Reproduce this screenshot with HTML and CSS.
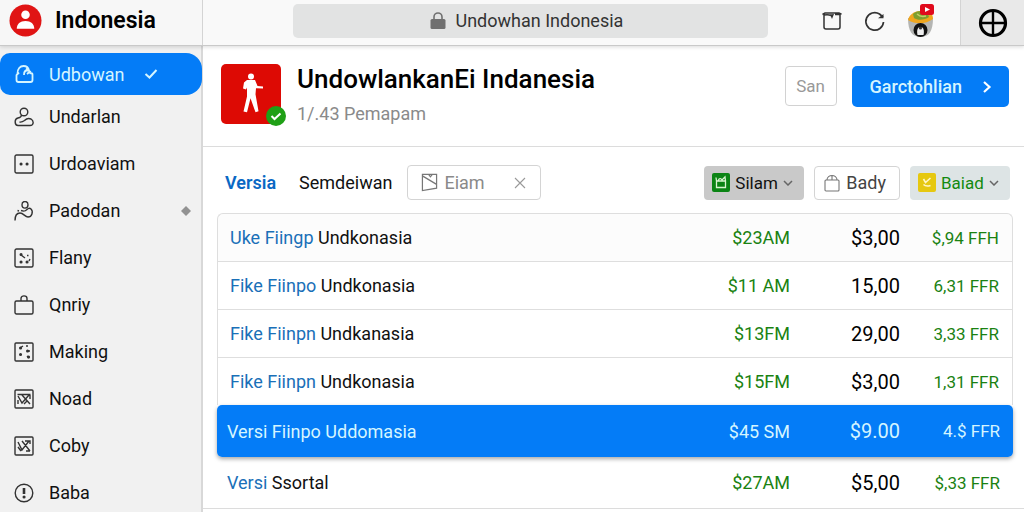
FILE: index.html
```
<!DOCTYPE html>
<html lang="id">
  <head>
    <meta charset="UTF-8" />
    <meta name="viewport" content="width=device-width, initial-scale=1.0" />
    <title>Undowhan Indonesia</title>
    <link rel="stylesheet" href="styles.css">
  </head>
  <body>
    <div class="app">
      <header class="topbar">
        <div class="brand">
          <svg class="brand-logo" viewBox="0 0 34 34" aria-hidden="true">
            <circle cx="17" cy="17" r="16.500" fill="#e01414" />
            <circle cx="17" cy="11" r="4.400" fill="#fff" />
            <path d="M8 25.500c0-5 3.500-8 9-8s9 3 9 8z" fill="#fff" />
          </svg>
          <span class="brand-name">Indonesia</span>
        </div>
        <div class="toolbar">
          <div class="address">
            <svg class="lock" viewBox="0 0 16 18" aria-hidden="true">
              <rect x="0.500" y="7" width="15" height="10" rx="1.500" fill="#707070" />
              <path d="M4 7V5a4 4 0 0 1 8 0v2" fill="none" stroke="#707070" stroke-width="1.600" />
            </svg>
            <input class="address-input" type="text" value="Undowhan Indonesia" aria-label="Address" />
          </div>
          <div class="tools">
            <button class="tool" aria-label="Share">
              <svg width="22" height="22" viewBox="0 0 22 22" fill="none" stroke="#333" stroke-width="1.500">
                <path d="M3 3.500V17a2 2 0 0 0 2 2h12a2 2 0 0 0 2-2V3.500" />
                <path d="M1.500 4.500L4 3h14l2.500 1.200M3 5c3-.500 5-.500 7 .500M19 4.500h-5" />
                <path d="M9 4.500l2 4.500 2-5z" fill="#333" stroke="none" />
              </svg>
            </button>
            <button class="tool" aria-label="Reload">
              <svg width="22" height="22" viewBox="0 0 22 22" fill="none" stroke="#333" stroke-width="1.700">
                <path d="M19.500 12A8.800 8.800 0 1 1 15.500 4L19 7" />
                <path d="M19.500 4v4.200h-5.500z" fill="#333" stroke="none" />
              </svg>
            </button>
            <button class="tool" aria-label="Profile">
              <svg width="28" height="34" viewBox="0 0 28 34">
                <path d="M1 14c0 13 4 19 12.500 19S26 27 26 14z" fill="#b4b5b3" />
                <path d="M1 16c1-5 6-9 12-9h7c4 1 6 4 6 8-7 5-17 6-25 1z" fill="#efa61e" />
                <path d="M6 10c4-4 11-4 15 0l1 3c-4 3-11 4-15 1z" fill="#7c9f2e" />
                <path d="M10 10c2 2 5 3 9 2" fill="none" stroke="#c3cf68" stroke-width="1.500" />
                <circle cx="13.500" cy="26" r="7" fill="#111" />
                <path d="M10.500 31c-1-5 0-8 3-8s4 3 3 8z" fill="#eee" />
                <circle cx="13.500" cy="24" r="1.600" fill="#333" />
                <rect x="13" y="0" width="14" height="11" rx="2.500" fill="#e00a1c" />
                <path d="M18 3l5 2.500-5 2.500z" fill="#fff" />
              </svg>
            </button>
          </div>
        </div>
        <button class="globe" aria-label="Language">
          <svg width="30" height="30" viewBox="0 0 30 30" fill="none" stroke="#000">
            <circle cx="15" cy="15" r="12.500" stroke-width="3.200" />
            <path d="M15 2v26M2 15h26" stroke-width="2.400" />
          </svg>
        </button>
      </header>

      <div class="content">
        <nav class="sidebar">
          <a class="nav-item active" href="#">
            <svg class="nav-icon" viewBox="0 0 20 20">
              <path d="M5 8.500L2.500 11v5c0 1.500 1 2 2 2h12c1.500 0 2-.800 2-2v-5.500c0-1-1-1.500-3-1.500M3.500 9.500C3.500 5 6 2 9.500 2c3 0 5 2 5.500 4.500h-2c-2 0-3 1.500-3 4.500M12 4.500l4 3-3 2.500" />
            </svg>
            <span>Udbowan</span>
            <svg class="tick" viewBox="0 0 14 10"><path d="M1.500 5l4 3.500L12.500 1" /></svg>
          </a>
          <a class="nav-item" href="#">
            <svg class="nav-icon" viewBox="0 0 20 20">
              <circle cx="10" cy="5" r="3.800" />
              <path d="M7.500 8c0 2-1 2.500-3.500 3-4 1-3.500 7.500 0 7.500h12c4 0 4-4.500 1-6.500-3-1.500-4.500-.500-6.500 1.500-2 1.500-3 2-5 1.500" />
            </svg>
            <span>Undarlan</span>
          </a>
          <a class="nav-item" href="#">
            <svg class="nav-icon" viewBox="0 0 20 20">
              <rect x="1" y="1" width="18" height="18" rx="1.500" />
              <path class="dots" d="M7 10h.1M13 10h.1" />
            </svg>
            <span>Urdoaviam</span>
          </a>
          <a class="nav-item" href="#">
            <svg class="nav-icon" viewBox="0 0 20 20">
              <ellipse cx="11" cy="3.800" rx="3" ry="3.300" />
              <path d="M1 19.500c0-5 2-7.500 5-7.500 3.500 0 5 4 8 4 4 0 5.500-5.500 3-8-1.500-1.500-3-.500-4 .500-2 2-3 2-6 1M3.500 9.500l1.500.500" />
            </svg>
            <span>Padodan</span>
            <svg class="diamond" viewBox="0 0 10 10"><path d="M5 0l5 5-5 5-5-5z" fill="#929292" /></svg>
          </a>
          <a class="nav-item" href="#">
            <svg class="nav-icon" viewBox="0 0 20 20">
              <rect x="1" y="1" width="18" height="18" rx="1.500" />
              <path class="dots" d="M7 6.500h.1M7 14h.1M13 14h.1" />
              <path d="M7 7l4 3M13 7.500h1.500M16 11l-1 2" />
            </svg>
            <span>Flany</span>
          </a>
          <a class="nav-item" href="#">
            <svg class="nav-icon" viewBox="0 0 20 20">
              <rect x="1" y="6" width="18" height="13" rx="1.500" />
              <path d="M7 6V3.500C7 0 13 0 13 3.500V6" />
            </svg>
            <span>Qnriy</span>
          </a>
          <a class="nav-item" href="#">
            <svg class="nav-icon" viewBox="0 0 20 20">
              <rect x="1" y="1" width="18" height="18" rx="1" />
              <path class="dots" d="M6.500 6h.1M13.500 9h.1M6.500 12.500h.1M14.500 15h.1" />
              <path d="M6 6l3-2M12 4h2M13 9h3M13 14l2 2" />
            </svg>
            <span>Making</span>
          </a>
          <a class="nav-item" href="#">
            <svg class="nav-icon" viewBox="0 0 20 20">
              <rect x="1" y="1" width="18" height="18" rx="1" />
              <path d="M3.500 5.500h13M4 7l4 7 7-8M8 6l8 9M4 15v-4M16 6v4M10 15l3-3" />
            </svg>
            <span>Noad</span>
          </a>
          <a class="nav-item" href="#">
            <svg class="nav-icon" viewBox="0 0 20 20">
              <rect x="1" y="1" width="18" height="18" rx="1" />
              <path d="M4 6l4 8 7-9M8 5l8 10M4 11l3 4M11 5h5v3M12 15h4" />
            </svg>
            <span>Coby</span>
          </a>
          <a class="nav-item" href="#">
            <svg class="nav-icon" viewBox="0 0 20 20">
              <circle cx="10" cy="10" r="8.800" />
              <path d="M10 5v6" stroke-width="2.600" />
              <path class="dots" d="M10 14h.1" />
            </svg>
            <span>Baba</span>
          </a>
        </nav>

        <main class="main">
          <section class="hero">
            <div class="app-icon">
              <svg width="60" height="60" viewBox="0 0 60 60" aria-hidden="true">
                <rect width="60" height="60" rx="5" fill="#dd0a04" />
                <g fill="#fff">
                  <circle cx="30" cy="12.500" r="3" />
                  <path d="M26 16h8l2.500 6 5.500.500v2l-7-.200-.500 6 3 17-3 1-5-14-3.500 14-3.500-.800 3.500-15v-9l-1 2-3-1 1-6z" />
                </g>
              </svg>
              <svg class="verified" viewBox="0 0 20 20" aria-hidden="true">
                <circle cx="10" cy="10" r="10" fill="#1fa016" />
                <path d="M5.500 10l3 3 6-5.500" fill="none" stroke="#fff" stroke-width="2" />
              </svg>
            </div>
            <div class="hero-text">
              <h1>UndowlankanEi Indanesia</h1>
              <p>1/.43 Pemapam</p>
            </div>
            <button class="btn-outline">San</button>
            <button class="btn-primary">
              <span>Garctohlian</span>
              <svg width="10" height="14" viewBox="0 0 10 14" fill="none" stroke="#fff" stroke-width="2.200"><path d="M2 2l5.500 5L2 12" /></svg>
            </button>
          </section>

          <section class="filters">
            <a class="tab current" href="#">Versia</a>
            <a class="tab" href="#">Semdeiwan</a>
            <div class="search">
              <svg width="17" height="19" viewBox="0 0 18 20" fill="none" stroke="#777" stroke-width="1.300">
                <path d="M1.500 1.500h15v14.500l-15 2.500zM1.500 3l15 9M8 1.500l2 2.500 2-2.500" />
              </svg>
              <input type="text" placeholder="Eiam" aria-label="Eiam" />
              <button class="clear" aria-label="Clear">
                <svg width="12" height="12" viewBox="0 0 12 12" stroke="#999" stroke-width="1.100"><path d="M1 1l10 10M11 1L1 11" /></svg>
              </button>
            </div>
            <div class="filter-group">
              <div class="drop gray">
                <svg width="18" height="19" viewBox="0 0 18 19" fill="none" stroke="#d9f5d0" stroke-width="1.300">
                  <rect width="18" height="19" rx="2" fill="#0b8414" stroke="none" />
                  <path d="M4.500 8v6.500h9V8zM4.500 8l-.500-3.500M6 8c1-3 3-3 4-1l3-3 .500 4" />
                </svg>
                <select aria-label="Silam"><option>Silam</option></select>
                <svg class="chevron" viewBox="0 0 10 6"><path d="M1 1l4 4 4-4" /></svg>
              </div>
              <button class="bady">
                <svg width="16" height="18" viewBox="0 0 16 18" fill="none" stroke="#777" stroke-width="1.100">
                  <rect x="1" y="6" width="14" height="11" rx="1" />
                  <path d="M3 6c0-6 10-6 10 0M8 1.500V6" />
                </svg>
                Bady
              </button>
              <div class="drop tint">
                <svg width="18" height="19" viewBox="0 0 18 19" fill="none" stroke="#fff6c8" stroke-width="1.600">
                  <rect width="18" height="19" rx="2" fill="#e6c810" stroke="none" />
                  <path d="M5.500 6l2 3.500L12.500 5M5.500 11.500c2 2 4 2 7 1" />
                </svg>
                <select aria-label="Baiad"><option>Baiad</option></select>
                <svg class="chevron" viewBox="0 0 10 6"><path d="M1 1l4 4 4-4" /></svg>
              </div>
            </div>
          </section>

          <div class="table-wrap">
            <table class="prices">
              <tbody>
                <tr><td><a href="#">Uke Fiingp</a> Undkonasia</td><td>$23AM</td><td>$3,00</td><td>$,94 FFH</td></tr>
                <tr><td><a href="#">Fike Fiinpo</a> Undkonasia</td><td>$11 AM</td><td>15,00</td><td>6,31 FFR</td></tr>
                <tr><td><a href="#">Fike Fiinpn</a> Undkanasia</td><td>$13FM</td><td>29,00</td><td>3,33 FFR</td></tr>
                <tr><td><a href="#">Fike Fiinpn</a> Undkonasia</td><td>$15FM</td><td>$3,00</td><td>1,31 FFR</td></tr>
                <tr class="selected"><td><a href="#">Versi Fiinpo</a> Uddomasia</td><td>$45 SM</td><td>$9.00</td><td>4.$ FFR</td></tr>
                <tr class="last"><td><a href="#">Versi</a> Ssortal</td><td>$27AM</td><td>$5,00</td><td>$,33 FFR</td></tr>
              </tbody>
            </table>
          </div>
        </main>
      </div>
    </div>
  </body>
</html>
```

FILE: styles.css
```
* {
  margin: 0;
  padding: 0;
  box-sizing: border-box;
}
body {
  font-family: Roboto, "Liberation Sans", sans-serif;
  font-size: 18px;
  color: #111;
  background-color: #fff;
}
a {
  color: inherit;
  text-decoration: none;
}
button,
input,
select {
  font: inherit;
  color: inherit;
  border: none;
  background: none;
}
button {
  cursor: pointer;
}
svg {
  flex-shrink: 0;
}
.app {
  min-height: 100vh;
  display: flex;
  flex-direction: column;
}

/* top bar */
.topbar {
  height: 46px;
  display: flex;
  background-color: #f9f9f9;
  border-bottom: 1px solid #c9c9c9;
  box-shadow: 0 1px 4px rgba(0, 0, 0, 0.15);
  position: relative;
}
.brand {
  width: 203px;
  padding: 0 0 4px 9px;
  display: flex;
  align-items: center;
  gap: 13px;
  background-color: #f7f7f7;
  border-right: 1px solid #d4d4d4;
}
.brand-logo {
  width: 33px;
  height: 33px;
}
.brand-name {
  font-size: 23px;
  font-weight: 600;
  color: #000;
}
.toolbar {
  flex: 1;
  display: flex;
  align-items: center;
  padding: 0 25px 4px 90px;
}
.address {
  flex: 1;
  height: 34px;
  display: flex;
  align-items: center;
  justify-content: center;
  gap: 10px;
  background-color: #e2e3e3;
  border-radius: 5px;
}
.lock {
  width: 16px;
  height: 18px;
}
.address-input {
  width: 176px;
  color: #333;
}
.tools {
  margin-left: 53px;
  display: flex;
  align-items: center;
  gap: 21px;
}
.tool {
  display: flex;
}
.globe {
  width: 64px;
  display: flex;
  align-items: center;
  justify-content: center;
  background-color: #e9e9e9;
  border-left: 1px solid #d4d4d4;
}

/* sidebar */
.content {
  flex: 1;
  display: flex;
}
.sidebar {
  width: 203px;
  padding-top: 7px;
  background-color: #f1f1f1;
  border-right: 2px solid #d8d8d8;
}
.nav-item {
  height: 47px;
  padding: 0 10px 0 14px;
  display: flex;
  align-items: center;
  gap: 15px;
}
.nav-item.active {
  height: 42px;
  margin: 0 -1px -2px 0;
  background-color: #047cf7;
  border-radius: 10px 16px 16px 10px;
  color: #d5f5ff;
}
.nav-icon {
  width: 20px;
  height: 20px;
  fill: none;
  stroke: #333;
  stroke-width: 1.4;
}
.nav-icon .dots {
  stroke-width: 3;
  stroke-linecap: round;
}
.active .nav-icon {
  stroke: #d5f5ff;
  stroke-width: 1.8;
}
.tick {
  width: 14px;
  height: 10px;
  margin-left: 5px;
  fill: none;
  stroke: #d5f5ff;
  stroke-width: 2;
}
.diamond {
  width: 10px;
  height: 10px;
  margin-left: auto;
}

/* main */
.main {
  flex: 1;
  min-width: 0;
}
.hero {
  padding: 18px 15px 20px 18px;
  display: flex;
  align-items: flex-start;
  border-bottom: 1px solid #dcdcdc;
}
.app-icon {
  height: 60px;
  position: relative;
}
.verified {
  width: 20px;
  height: 20px;
  position: absolute;
  right: -5px;
  bottom: -2px;
}
.hero-text {
  flex: 1;
  margin-left: 16px;
}
h1 {
  font-size: 26px;
  font-weight: 500;
  line-height: 30px;
  color: #000;
}
.hero-text p {
  margin-top: 8px;
  line-height: 24px;
  color: #8a8a8a;
}
.btn-outline {
  width: 52px;
  height: 40px;
  margin: 2px 15px 0 0;
  border: 1px solid #d2d2d2;
  border-radius: 4px;
  font-size: 17px;
  color: #999;
}
.btn-primary {
  height: 41px;
  margin-top: 2px;
  padding: 0 17px 0 18px;
  display: flex;
  align-items: center;
  gap: 20px;
  background-color: #047cf7;
  border-radius: 5px;
  font-weight: 500;
  color: #d5f5ff;
}
.filters {
  padding: 18px 14px 13px 22px;
  display: flex;
  align-items: center;
}
.tab {
  margin-right: 23px;
}
.tab.current {
  font-weight: 600;
  color: #0a68c4;
}
.search {
  width: 134px;
  height: 35px;
  margin-left: -8px;
  padding: 0 14px 0 13px;
  display: flex;
  align-items: center;
  gap: 6px;
  border: 1px solid #d4d4d4;
  border-radius: 4px;
}
.search input {
  flex: 1;
  min-width: 0;
}
.search input::placeholder {
  color: #8a8a8a;
}
.clear {
  display: flex;
}
.filter-group {
  margin-left: auto;
  display: flex;
  gap: 10px;
}
.drop {
  height: 34px;
  padding: 0 11px 0 8px;
  display: flex;
  align-items: center;
  gap: 5px;
  border-radius: 4px;
  font-size: 17px;
}
.drop select {
  appearance: none;
}
.gray {
  background-color: #c9c9c9;
}
.tint {
  background-color: #dde4e5;
  color: #138a10;
}
.chevron {
  width: 10px;
  height: 6px;
  fill: none;
  stroke: #666;
  stroke-width: 1.5;
}
.bady {
  height: 34px;
  padding: 0 13px 0 9px;
  display: flex;
  align-items: center;
  gap: 6px;
  border: 1px solid #d4d4d4;
  border-radius: 4px;
  color: #444;
}

/* price table */
.table-wrap {
  padding: 0 11px 0 14px;
  border-bottom: 1px solid #dcdcdc;
}
.prices {
  width: 100%;
  border-spacing: 0;
}
.prices td {
  height: 48px;
  border-top: 1px solid #dedede;
  text-align: right;
  color: #1a8212;
}
.prices td:first-child {
  padding-left: 12px;
  border-left: 1px solid #dedede;
  text-align: left;
  color: #111;
}
.prices td:nth-child(2) {
  width: 110px;
}
.prices td:nth-child(3) {
  width: 110px;
  font-size: 20px;
  color: #000;
}
.prices td:last-child {
  width: 113px;
  padding-right: 13px;
  border-right: 1px solid #dedede;
  font-size: 17px;
}
.prices a {
  color: #1a70b8;
}
.prices tr:first-child td {
  background-color: #fcfcfc;
}
.prices tr:first-child td:first-child {
  border-top-left-radius: 6px;
}
.prices tr:first-child td:last-child {
  border-top-right-radius: 6px;
}
.prices .selected {
  border-radius: 5px;
  box-shadow: 0 2px 4px rgba(0, 0, 0, 0.35);
}
.prices .selected td {
  height: 52px;
  border: none;
  background-color: #047cf7;
  color: #d5f5ff;
}
.prices .selected a {
  color: inherit;
}
.prices .selected td:first-child {
  border-radius: 5px 0 0 5px;
}
.prices .selected td:last-child {
  border-radius: 0 5px 5px 0;
}
.prices .last td {
  height: 51px;
  border: none;
}
.prices .selected td:first-child,
.prices .last td:first-child {
  padding-left: 10px;
}
```
